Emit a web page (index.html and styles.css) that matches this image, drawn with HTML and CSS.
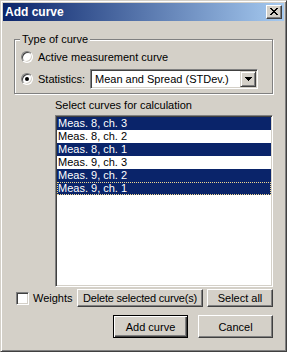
FILE: index.html
```html
<!DOCTYPE html>
<html lang="en">
<head>
  <meta charset="UTF-8">
  <title>Add curve</title>
  <link rel="stylesheet" href="styles.css">
</head>
<body>

  <div class="window">

    <!-- Title bar -->
    <div class="titlebar">
      <span class="title">Add curve</span>
      <button class="close" aria-label="Close">
        <svg width="8" height="7" viewBox="0 0 8 7" shape-rendering="crispEdges">
          <path fill="#000" d="M0 0h2v1h-2z M6 0h2v1h-2z M1 1h2v1h-2z M5 1h2v1h-2z M2 2h4v1h-4z M3 3h2v1h-2z M2 4h4v1h-4z M1 5h2v1h-2z M5 5h2v1h-2z M0 6h2v1h-2z M6 6h2v1h-2z"/>
        </svg>
      </button>
    </div>

    <div class="content">

      <!-- Type of curve -->
      <fieldset class="group">
        <legend>Type of curve</legend>
        <label class="opt opt-first"><span class="radio"></span>Active measurement curve</label>
        <div class="opt opt-stats">
          <span class="radio checked"></span>
          <span class="opt-label">Statistics:</span>
          <div class="combo">
            <span class="combo-text">Mean and Spread (STDev.)</span>
            <span class="combo-btn">
              <svg width="7" height="4" viewBox="0 0 7 4" shape-rendering="crispEdges">
                <path fill="#000" d="M0 0h7v1h-7z M1 1h5v1h-5z M2 2h3v1h-3z M3 3h1v1h-1z"/>
              </svg>
            </span>
          </div>
        </div>
      </fieldset>

      <!-- Curve list -->
      <div class="list-label">Select curves for calculation</div>
      <ul class="curve-list">
        <li class="sel">Meas. 8, ch. 3</li>
        <li>Meas. 8, ch. 2</li>
        <li class="sel">Meas. 8, ch. 1</li>
        <li>Meas. 9, ch. 3</li>
        <li class="sel">Meas. 9, ch. 2</li>
        <li class="sel focus">Meas. 9, ch. 1</li>
      </ul>

      <div class="tools">
        <label class="check"><span class="checkbox"></span>Weights</label>
        <div class="tools-btns">
          <button class="btn btn-del">Delete selected curve(s)</button>
          <button class="btn btn-all">Select all</button>
        </div>
      </div>

      <div class="actions">
        <button class="btn btn-big btn-default">Add curve</button>
        <button class="btn btn-big">Cancel</button>
      </div>

    </div>
  </div>

</body>
</html>
```

FILE: styles.css
```css
:root {
  --face: #d4d0c8;
  --shadow: #808080;
  --dark: #404040;
  --light: #fff;
  --navy: #0a246a;
}

*, *::before, *::after {
  margin: 0; padding: 0; box-sizing: border-box;
}
body {
  font-family: "Liberation Sans", Arial, sans-serif;
  font-size: 11px;
  color: #000;
  background: var(--face);
}
button {
  font-family: inherit;
  font-size: 11px;
  color: #000;
}

.window {
  width: 287px;
  height: 352px;
  border: 1px solid;
  border-color: var(--face) var(--dark) var(--dark) var(--face);
  box-shadow: inset 1px 1px var(--light), inset -1px -1px var(--shadow);
  padding: 2px;
}

.titlebar {
  height: 18px;
  display: flex;
  align-items: center;
  justify-content: space-between;
  padding: 0 2px;
  background: linear-gradient(to right, var(--navy), #a6caf0);
  color: #fff;
  font-weight: bold;
  font-size: 12px;
}
.close {
  width: 16px;
  height: 14px;
  display: flex;
  align-items: center;
  justify-content: center;
  background: var(--face);
  border: 1px solid;
  border-color: var(--light) var(--dark) var(--dark) var(--light);
  box-shadow: inset -1px -1px var(--shadow);
}
.close svg {
  display: block;
  margin: 0 1px 1px 0;
}

.content {
  padding: 0 11px;
}

.group {
  margin-top: 12px;
  border: 1px solid var(--shadow);
  box-shadow: inset 1px 1px var(--light), 1px 1px var(--light);
  padding: 0 6px 4px 5px;
  min-width: 0;
}
.group legend {
  padding: 0 2px;
  line-height: 13px;
  background: var(--face);
}

.opt {
  display: flex;
  align-items: center;
  gap: 5px;
  margin-left: 1px;
}
.opt-first {
  height: 16px;
  margin-top: 3px;
}
.opt-stats {
  height: 21px;
  margin-top: 3px;
}
.opt-label {
  width: 47px;
}

.radio {
  position: relative;
  flex: none;
  width: 12px;
  height: 12px;
  border-radius: 50%;
  background: #fff;
  border: 1px solid;
  border-color: var(--shadow) var(--light) var(--light) var(--shadow);
  box-shadow: inset 1px 1px var(--dark), inset -1px -1px var(--face);
}
.radio.checked::after {
  content: "";
  position: absolute;
  left: 3px;
  top: 3px;
  width: 4px;
  height: 4px;
  border-radius: 50%;
  background: #000;
}

.combo {
  width: 168px;
  height: 20px;
  display: flex;
  align-items: center;
  padding: 1px 1px 1px 4px;
  background: #fff;
  border: 1px solid;
  border-color: var(--shadow) var(--light) var(--light) var(--shadow);
  box-shadow: inset 1px 1px var(--dark), inset -1px -1px var(--face);
}
.combo-text {
  flex: 1;
  white-space: nowrap;
}
.combo-btn {
  width: 16px;
  height: 16px;
  display: flex;
  align-items: center;
  justify-content: center;
  background: var(--face);
  border: 1px solid;
  border-color: var(--face) var(--dark) var(--dark) var(--face);
  box-shadow: inset 1px 1px var(--light), inset -1px -1px var(--shadow);
}

.list-label {
  margin: 5px 0 3px 41px;
  line-height: 13px;
}
.curve-list {
  list-style: none;
  margin-left: 41px;
  height: 172px;
  padding: 1px;
  background: #fff;
  border: 1px solid;
  border-color: var(--shadow) var(--light) var(--light) var(--shadow);
  box-shadow: inset 1px 1px var(--dark), inset -1px -1px var(--face);
}
.curve-list li {
  height: 13px;
  line-height: 13px;
  padding-left: 1px;
  white-space: nowrap;
}
.curve-list li.sel {
  background: var(--navy);
  color: #fff;
}
.curve-list li.focus {
  outline: 1px dotted #f0d890;
  outline-offset: -1px;
}

.tools {
  display: flex;
  align-items: center;
  height: 18px;
  margin-top: 2px;
}
.check {
  display: flex;
  align-items: center;
  gap: 4px;
  margin-left: 2px;
}
.checkbox {
  width: 13px;
  height: 13px;
  background: #fff;
  border: 1px solid;
  border-color: var(--shadow) var(--light) var(--light) var(--shadow);
  box-shadow: inset 1px 1px var(--dark), inset -1px -1px var(--face);
}
.tools-btns {
  display: flex;
  gap: 4px;
  margin-left: auto;
}

.btn {
  height: 18px;
  background: var(--face);
  border: 1px solid;
  border-color: var(--light) var(--dark) var(--dark) var(--light);
  box-shadow: inset -1px -1px var(--shadow);
  white-space: nowrap;
}
.btn-del {
  width: 126px;
  letter-spacing: -0.2px;
}
.btn-all { width: 66px; }

.actions {
  display: flex;
  justify-content: flex-end;
  gap: 10px;
  margin-top: 8px;
}
.btn-big {
  width: 75px;
  height: 23px;
}
.btn-default {
  border: 1px solid #000;
  box-shadow: inset 1px 1px var(--light), inset -1px -1px var(--dark), inset -2px -2px var(--shadow);
}
```
